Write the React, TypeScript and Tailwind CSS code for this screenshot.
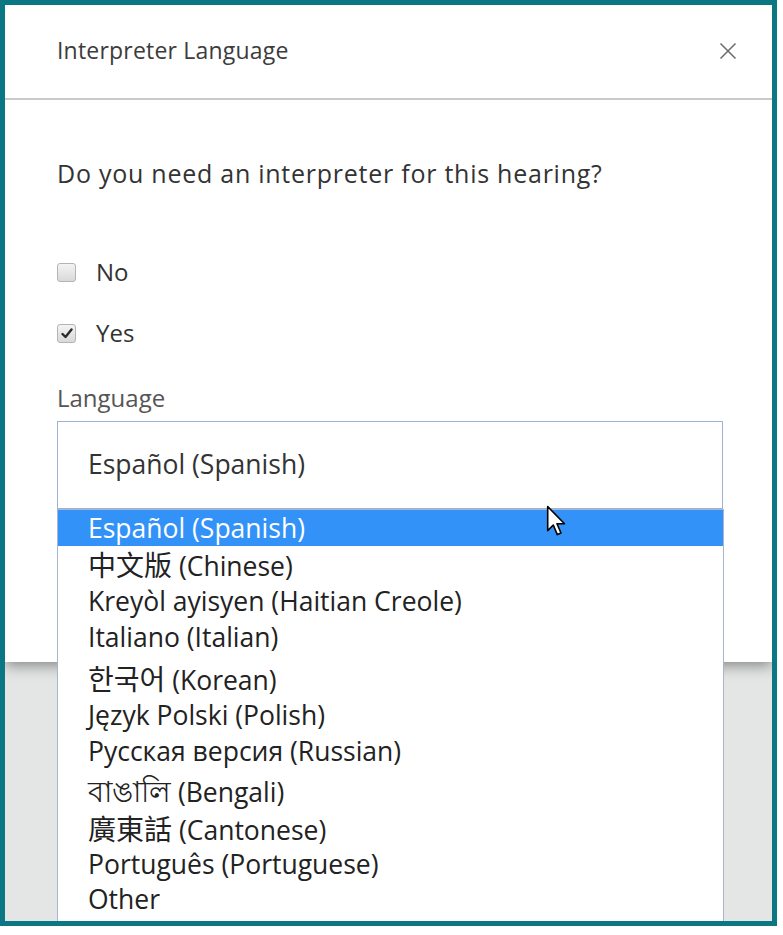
import type { ReactNode } from 'react';

const FONT = 'font-["Open_Sans","Noto_Sans","Noto_Sans_CJK_KR",sans-serif]';

const languages: { label: ReactNode; height: string }[] = [
  { label: 'Español (Spanish)', height: 'h-[36px]' },
  {
    label: (
      <>
        <span className="font-['Noto_Sans_CJK_SC',sans-serif] text-[28px]">中文版</span> (Chinese)
      </>
    ),
    height: 'h-[38px]',
  },
  { label: 'Kreyòl ayisyen (Haitian Creole)', height: 'h-[35px]' },
  { label: 'Italiano (Italian)', height: 'h-[36px]' },
  {
    label: (
      <>
        <span className="font-['Noto_Sans_CJK_KR',sans-serif] text-[28px]">한국어</span> (Korean)
      </>
    ),
    height: 'h-[43px] pt-[5px]',
  },
  { label: 'Język Polski (Polish)', height: 'h-[35px]' },
  { label: 'Русская версия (Russian)', height: 'h-[36px]' },
  {
    label: (
      <>
        <span className="text-[29px]">বাঙালি</span> (Bengali)
      </>
    ),
    height: 'h-[42px] pt-[2px]',
  },
  {
    label: (
      <>
        <span className="font-['Noto_Sans_CJK_TC',sans-serif] text-[28px]">廣東話</span> (Cantonese)
      </>
    ),
    height: 'h-[36px]',
  },
  { label: 'Português (Portuguese)', height: 'h-[35px]' },
  { label: 'Other', height: 'h-[35px]' },
];

function Checkbox({ checked }: { checked?: boolean }) {
  return (
    <span className="flex h-[19px] w-[19px] shrink-0 items-center justify-center rounded-[3px] border border-[#b4b4b4] bg-gradient-to-b from-[#f4f4f4] to-[#d9d9d9]">
      {checked ? (
        <svg width="12" height="11" viewBox="0 0 12 11">
          <path d="M1.5 6 L4.5 9 L10.5 1.5" fill="none" stroke="#2b2b2b" strokeWidth="2.4" strokeLinecap="round" strokeLinejoin="round" />
        </svg>
      ) : null}
    </span>
  );
}

function Cursor() {
  return (
    <svg width="21" height="32" viewBox="0 0 13 20" className="pointer-events-none absolute left-[541px] top-[500px]">
      <path
        d="M1 1 L1 16 L4.5 12.5 L7 18.5 L9.3 17.5 L6.8 11.7 L11.5 11.7 Z"
        fill="#ffffff"
        stroke="#000000"
        strokeWidth="1"
        strokeLinejoin="round"
      />
    </svg>
  );
}

export default function App() {
  return (
    <div className={`h-[935px] w-[783px] bg-white ${FONT}`}>
      <div className="relative h-[926px] w-[777px] overflow-hidden border-[5px] border-[#0b7783] bg-[#e4e6e6]">
        <div className="flex h-[657px] flex-col bg-white shadow-[0_3px_14px_rgba(0,0,0,0.45)]">
          <div className="flex h-[95px] items-center justify-between border-b-2 border-[#c9c9c9] pl-[52px] pr-[35px] pb-[2px]">
            <p className="text-[23px] tracking-[0.2px] text-[#3c3c3c]">Interpreter Language</p>
            <svg width="18" height="18" viewBox="0 0 18 18">
              <path d="M1.5 1.5 L16.5 16.5 M16.5 1.5 L1.5 16.5" stroke="#6a6a6a" strokeWidth="1.5" />
            </svg>
          </div>

          <div className="flex flex-col pl-[52px] pr-[49px]">
            <p className="mt-[58px] text-[25px] leading-[30px] tracking-[0.75px] text-[#333]">
              Do you need an interpreter for this hearing?
            </p>

            <label className="mt-[69px] flex h-[30px] items-center gap-[20px] text-[24px] text-[#333]">
              <Checkbox />
              <span>No</span>
            </label>
            <label className="mt-[31px] flex h-[30px] items-center gap-[20px] text-[24px] text-[#333]">
              <Checkbox checked />
              <span>Yes</span>
            </label>

            <p className="mt-[36px] text-[24px] leading-[28px] text-[#555]">Language</p>

            <div className="mt-[9px] flex h-[88px] items-center border border-[#9db2d8] px-[30px] text-[26.5px] text-[#333]">
              Español (Spanish)
            </div>
          </div>
        </div>

        <ul className="absolute left-[52px] top-[504px] h-[420px] w-[667px] border border-[#a9b5d0] bg-white text-[26.5px] text-[#222]">
          {languages.map((language, index) => (
            <li
              key={index}
              className={[
                'flex items-center pl-[30px] leading-none',
                language.height,
                index === 0 ? 'bg-[#3392f7] text-white' : '',
              ].join(' ')}
            >
              <span className="whitespace-pre">{language.label}</span>
            </li>
          ))}
        </ul>

        <Cursor />
      </div>
    </div>
  );
}
